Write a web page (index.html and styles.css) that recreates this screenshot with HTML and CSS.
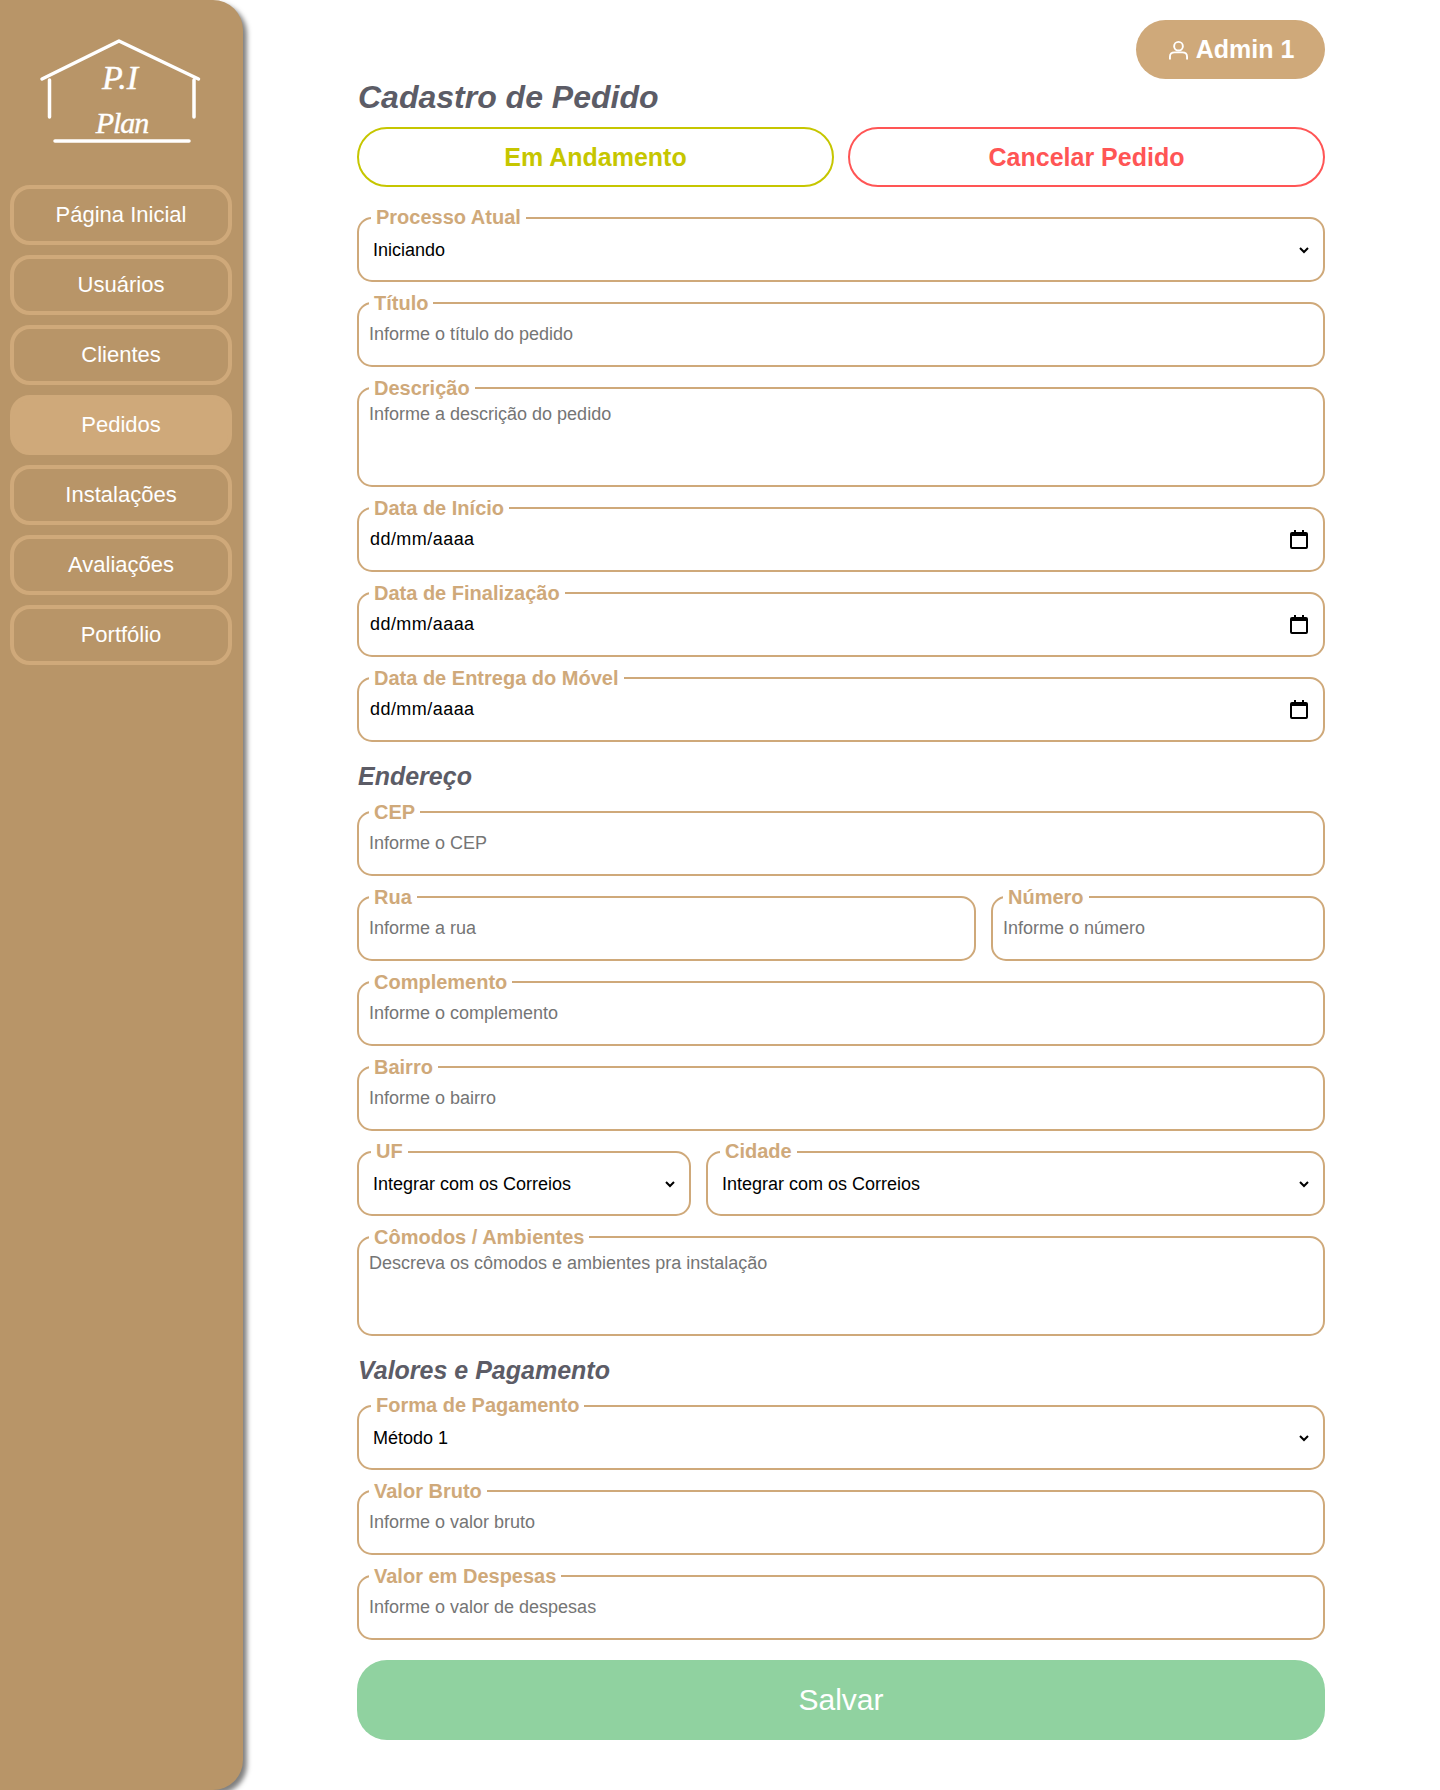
FILE: index.html
```html
<!DOCTYPE html>
<html lang="pt-BR">
<head>
  <meta charset="UTF-8">
  <title>Cadastro de Pedido - P.I Plan</title>
  <link rel="stylesheet" href="styles.css">
</head>
<body>

  <aside class="sidebar">
    <div class="logo">
      <svg width="180" height="112" viewBox="0 0 180 112">
        <path class="logo-line" d="M12 40 L89 2 L168.500 40 M19.500 41 V78 M164 41 V78 M25 102 H159"/>
        <text class="logo-text logo-pi" x="90" y="50" text-anchor="middle">P.I</text>
        <text class="logo-text logo-plan" x="92" y="94" text-anchor="middle">Plan</text>
      </svg>
    </div>
    <nav class="menu">
      <a href="#">Página Inicial</a>
      <a href="#">Usuários</a>
      <a href="#">Clientes</a>
      <a href="#" class="active">Pedidos</a>
      <a href="#">Instalações</a>
      <a href="#">Avaliações</a>
      <a href="#">Portfólio</a>
    </nav>
  </aside>

  <main class="content">
    <div class="topbar">
      <button type="button" class="user-btn">
        <svg width="19" height="20" viewBox="0 0 20 20">
          <circle cx="10" cy="6" r="4.6"/>
          <path d="M1 20 V17 Q1 12.5 6 12.5 H14 Q19 12.5 19 17 V20"/>
        </svg>
        Admin 1
      </button>
    </div>

    <h1>Cadastro de Pedido</h1>

    <div class="status-row">
      <button type="button" class="status-btn progress">Em Andamento</button>
      <button type="button" class="status-btn cancel">Cancelar Pedido</button>
    </div>

    <form>
      <fieldset class="field field-select">
        <legend>Processo Atual</legend>
        <select><option>Iniciando</option></select>
      </fieldset>

      <fieldset class="field">
        <legend>Título</legend>
        <input type="text" placeholder="Informe o título do pedido">
      </fieldset>

      <fieldset class="field">
        <legend>Descrição</legend>
        <textarea placeholder="Informe a descrição do pedido"></textarea>
      </fieldset>

      <fieldset class="field">
        <legend>Data de Início</legend>
        <div class="date-box">
          <input type="text" value="dd/mm/aaaa">
          <svg class="cal" width="18" height="19" viewBox="0 0 18 19"><path d="M4 0 H6 V2 H12 V0 H14 V2 H16 Q18 2 18 4 V17 Q18 19 16 19 H2 Q0 19 0 17 V4 Q0 2 2 2 H4 Z M2 6 V17 H16 V6 Z"/></svg>
        </div>
      </fieldset>

      <fieldset class="field">
        <legend>Data de Finalização</legend>
        <div class="date-box">
          <input type="text" value="dd/mm/aaaa">
          <svg class="cal" width="18" height="19" viewBox="0 0 18 19"><path d="M4 0 H6 V2 H12 V0 H14 V2 H16 Q18 2 18 4 V17 Q18 19 16 19 H2 Q0 19 0 17 V4 Q0 2 2 2 H4 Z M2 6 V17 H16 V6 Z"/></svg>
        </div>
      </fieldset>

      <fieldset class="field">
        <legend>Data de Entrega do Móvel</legend>
        <div class="date-box">
          <input type="text" value="dd/mm/aaaa">
          <svg class="cal" width="18" height="19" viewBox="0 0 18 19"><path d="M4 0 H6 V2 H12 V0 H14 V2 H16 Q18 2 18 4 V17 Q18 19 16 19 H2 Q0 19 0 17 V4 Q0 2 2 2 H4 Z M2 6 V17 H16 V6 Z"/></svg>
        </div>
      </fieldset>

      <h2>Endereço</h2>

      <fieldset class="field">
        <legend>CEP</legend>
        <input type="text" placeholder="Informe o CEP">
      </fieldset>

      <div class="row row-street">
        <fieldset class="field">
          <legend>Rua</legend>
          <input type="text" placeholder="Informe a rua">
        </fieldset>
        <fieldset class="field">
          <legend>Número</legend>
          <input type="text" placeholder="Informe o número">
        </fieldset>
      </div>

      <fieldset class="field">
        <legend>Complemento</legend>
        <input type="text" placeholder="Informe o complemento">
      </fieldset>

      <fieldset class="field">
        <legend>Bairro</legend>
        <input type="text" placeholder="Informe o bairro">
      </fieldset>

      <div class="row row-city">
        <fieldset class="field field-select">
          <legend>UF</legend>
          <select><option>Integrar com os Correios</option></select>
        </fieldset>
        <fieldset class="field field-select">
          <legend>Cidade</legend>
          <select><option>Integrar com os Correios</option></select>
        </fieldset>
      </div>

      <fieldset class="field">
        <legend>Cômodos / Ambientes</legend>
        <textarea placeholder="Descreva os cômodos e ambientes pra instalação"></textarea>
      </fieldset>

      <h2>Valores e Pagamento</h2>

      <fieldset class="field field-select">
        <legend>Forma de Pagamento</legend>
        <select><option>Método 1</option></select>
      </fieldset>

      <fieldset class="field">
        <legend>Valor Bruto</legend>
        <input type="text" placeholder="Informe o valor bruto">
      </fieldset>

      <fieldset class="field">
        <legend>Valor em Despesas</legend>
        <input type="text" placeholder="Informe o valor de despesas">
      </fieldset>

      <button type="button" class="save-btn">Salvar</button>
    </form>
  </main>

</body>
</html>
```

FILE: styles.css
```css
* {
  box-sizing: border-box;
}

body {
  font-family: "Liberation Sans", Arial, sans-serif;
  background-color: #fff;
  margin: 0;
  padding: 0;
  display: flex;
  min-height: 1790px;
}

/* Menu lateral */
.sidebar {
  width: 243px;
  flex-shrink: 0;
  background-color: #b89568;
  border-radius: 0 30px 30px 0;
  box-shadow: 4px 4px 5px rgba(0, 0, 0, 0.5);
  padding: 39px 11px 0 10px;
}

.logo {
  display: flex;
  justify-content: center;
  height: 146px;
  padding-right: 2px;
}

.logo-line {
  fill: none;
  stroke: #fff;
  stroke-width: 3.5;
  stroke-linecap: round;
  stroke-linejoin: round;
}

.logo-text {
  font-family: "Liberation Serif", serif;
  font-style: italic;
  fill: #fff;
  stroke: #fff;
  stroke-width: 0.4;
}

.logo-pi {
  font-size: 34px;
}

.logo-plan {
  font-size: 30px;
  letter-spacing: -1px;
}

.menu {
  display: flex;
  flex-direction: column;
  gap: 10px;
}

.menu a {
  display: flex;
  align-items: center;
  justify-content: center;
  height: 60px;
  border: 4px solid #cfa97a;
  border-radius: 20px;
  color: #fff;
  font-size: 22px;
  text-decoration: none;
}

.menu a.active {
  background-color: #cfa97a;
}

/* Conteudo */
.content {
  width: 968px;
  margin-left: 114px;
  padding-top: 20px;
}

.topbar {
  display: flex;
  justify-content: flex-end;
}

.user-btn {
  display: flex;
  align-items: center;
  justify-content: center;
  gap: 8px;
  width: 189px;
  height: 59px;
  padding: 0 0 0 2px;
  border: none;
  border-radius: 30px;
  background-color: #cfa97a;
  color: #fff;
  font-family: inherit;
  font-size: 25px;
  font-weight: bold;
}

.user-btn svg {
  fill: none;
  stroke: #fff;
  stroke-width: 2;
}

h1 {
  margin: 0 0 11px;
  padding-left: 1px;
  color: #5c5c66;
  font-size: 32px;
  line-height: 37px;
  font-style: italic;
}

h2 {
  margin: 0;
  height: 49px;
  padding: 9px 0 0 1px;
  color: #5c5c66;
  font-size: 25px;
  line-height: 30px;
  font-style: italic;
}

.status-row {
  display: flex;
  gap: 14px;
  margin-bottom: 20px;
}

.status-btn {
  flex: 1;
  height: 60px;
  background: #fff;
  border: 2px solid;
  border-radius: 30px;
  font-family: inherit;
  font-size: 25px;
  font-weight: bold;
}

.progress {
  color: #c6c600;
  border-color: #c6c600;
}

.cancel {
  color: #ff5555;
  border-color: #ff5555;
}

/* Campos */
.field {
  margin: 0 0 10px;
  padding: 0 10px 11px;
  min-width: 0;
  border: 2px solid #cfa97a;
  border-radius: 15px;
}

.field legend {
  padding: 0 5px;
  color: #cfa97a;
  font-size: 20px;
  font-weight: bold;
  line-height: 22px;
}

.field-select {
  margin-top: -1px;
  padding-right: 11px;
  padding-bottom: 10px;
}

.field-select legend {
  margin-left: 2px;
  padding-bottom: 2px;
}

.field input,
.field select,
.field textarea {
  display: block;
  width: 100%;
  border: none;
  outline: none;
  padding: 0;
  background: #fff;
  color: #000;
  font-family: inherit;
  font-size: 18px;
}

.field input,
.field select {
  height: 40px;
}

.field textarea {
  height: 75px;
  padding-top: 5px;
  resize: none;
}

.date-box {
  display: flex;
  align-items: center;
}

.date-box input {
  flex: 1;
  padding-left: 1px;
  letter-spacing: 0.45px;
}

.cal {
  flex-shrink: 0;
  margin-right: 5px;
}

.row {
  display: grid;
  gap: 15px;
}

.row-street {
  grid-template-columns: 1fr 334px;
}

.row-city {
  grid-template-columns: 334px 1fr;
}

.save-btn {
  display: block;
  width: 100%;
  height: 80px;
  margin-top: 20px;
  border: none;
  border-radius: 30px;
  background-color: #90d2a0;
  color: #fff;
  font-family: inherit;
  font-size: 30px;
}
```
